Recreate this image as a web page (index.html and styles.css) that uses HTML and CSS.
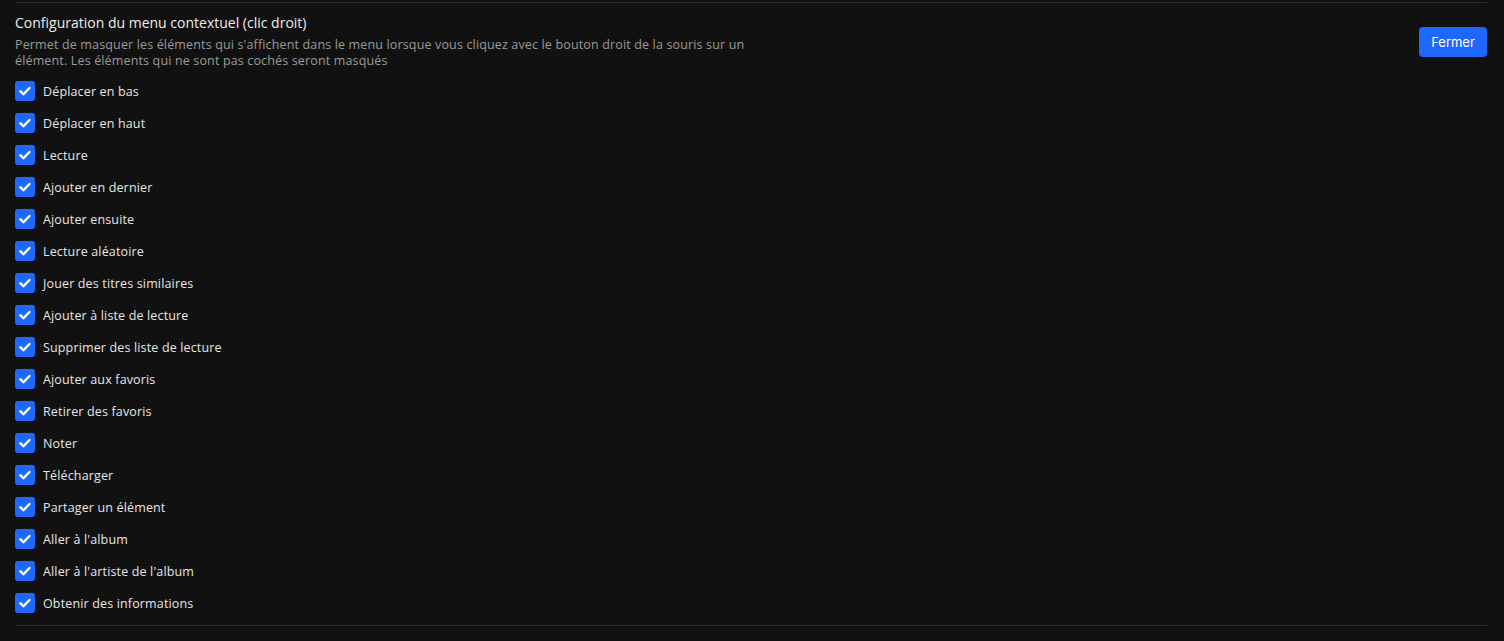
FILE: index.html
```html
<!DOCTYPE html>
<html lang="fr">
<head>
    <meta charset="UTF-8">
    <meta name="viewport" content="width=device-width, initial-scale=1.0">
    <title>Configuration du menu contextuel</title>
    <link rel="stylesheet" href="styles.css">
</head>
<body>
    <section class="settings">
        <div class="settings-head">
            <div class="settings-text">
                <h2>Configuration du menu contextuel (clic droit)</h2>
                <p>Permet de masquer les éléments qui s'affichent dans le menu lorsque vous cliquez avec le bouton droit de la souris sur un élément. Les éléments qui ne sont pas cochés seront masqués</p>
            </div>
            <button class="btn">Fermer</button>
        </div>

        <ul class="options">
            <li><span class="check"><svg viewBox="0 0 20 20"><path d="M5.5 10.3l3 2.9 6-6.2"/></svg></span>Déplacer en bas</li>
            <li><span class="check"><svg viewBox="0 0 20 20"><path d="M5.5 10.3l3 2.9 6-6.2"/></svg></span>Déplacer en haut</li>
            <li><span class="check"><svg viewBox="0 0 20 20"><path d="M5.5 10.3l3 2.9 6-6.2"/></svg></span>Lecture</li>
            <li><span class="check"><svg viewBox="0 0 20 20"><path d="M5.5 10.3l3 2.9 6-6.2"/></svg></span>Ajouter en dernier</li>
            <li><span class="check"><svg viewBox="0 0 20 20"><path d="M5.5 10.3l3 2.9 6-6.2"/></svg></span>Ajouter ensuite</li>
            <li><span class="check"><svg viewBox="0 0 20 20"><path d="M5.5 10.3l3 2.9 6-6.2"/></svg></span>Lecture aléatoire</li>
            <li><span class="check"><svg viewBox="0 0 20 20"><path d="M5.5 10.3l3 2.9 6-6.2"/></svg></span>Jouer des titres similaires</li>
            <li><span class="check"><svg viewBox="0 0 20 20"><path d="M5.5 10.3l3 2.9 6-6.2"/></svg></span>Ajouter à liste de lecture</li>
            <li><span class="check"><svg viewBox="0 0 20 20"><path d="M5.5 10.3l3 2.9 6-6.2"/></svg></span>Supprimer des liste de lecture</li>
            <li><span class="check"><svg viewBox="0 0 20 20"><path d="M5.5 10.3l3 2.9 6-6.2"/></svg></span>Ajouter aux favoris</li>
            <li><span class="check"><svg viewBox="0 0 20 20"><path d="M5.5 10.3l3 2.9 6-6.2"/></svg></span>Retirer des favoris</li>
            <li><span class="check"><svg viewBox="0 0 20 20"><path d="M5.5 10.3l3 2.9 6-6.2"/></svg></span>Noter</li>
            <li><span class="check"><svg viewBox="0 0 20 20"><path d="M5.5 10.3l3 2.9 6-6.2"/></svg></span>Télécharger</li>
            <li><span class="check"><svg viewBox="0 0 20 20"><path d="M5.5 10.3l3 2.9 6-6.2"/></svg></span>Partager un élément</li>
            <li><span class="check"><svg viewBox="0 0 20 20"><path d="M5.5 10.3l3 2.9 6-6.2"/></svg></span>Aller à l'album</li>
            <li><span class="check"><svg viewBox="0 0 20 20"><path d="M5.5 10.3l3 2.9 6-6.2"/></svg></span>Aller à l'artiste de l'album</li>
            <li><span class="check"><svg viewBox="0 0 20 20"><path d="M5.5 10.3l3 2.9 6-6.2"/></svg></span>Obtenir des informations</li>
        </ul>
    </section>
</body>
</html>
```

FILE: styles.css
```css
body {
    font-family: "Open Sans", "Noto Sans", sans-serif;
    background-color: #111111;
    color: #e8e8e8;
    margin: 0;
    padding: 0 17px 0 15px;
}
.settings {
    margin-top: 2px;
    border-top: 1px solid #2b2b2b;
    border-bottom: 1px solid #2b2b2b;
    padding: 10px 0 12px;
}
.settings-head {
    display: flex;
    align-items: center;
    justify-content: space-between;
}
.settings-text h2 {
    margin: 0;
    font-size: 14px;
    font-weight: 400;
    line-height: 20px;
    color: #ececec;
}
.settings-text p {
    margin: 4px 0 0;
    max-width: 740px;
    font-size: 12.5px;
    letter-spacing: 0.15px;
    line-height: 16px;
    color: #9a9a9a;
}
.btn {
    margin-top: 2px;
    background-color: #1f68ff;
    color: #fff;
    border: none;
    border-radius: 4px;
    height: 30px;
    width: 68px;
    font-family: Inter, sans-serif;
    font-size: 13px;
    cursor: pointer;
}
.options {
    list-style: none;
    margin: 12px 0 0;
    padding: 0;
    display: flex;
    flex-direction: column;
    gap: 12px;
}
.options li {
    display: flex;
    align-items: center;
    gap: 8px;
    height: 20px;
    font-size: 12.5px;
    letter-spacing: 0.15px;
    color: #e6e6e6;
}
.check {
    width: 20px;
    height: 20px;
    border-radius: 3px;
    background-color: #1f68ff;
    display: flex;
    flex-shrink: 0;
}
.check svg {
    width: 20px;
    height: 20px;
    fill: none;
    stroke: #fff;
    stroke-width: 2.4;
    stroke-linecap: round;
    stroke-linejoin: round;
}
```
